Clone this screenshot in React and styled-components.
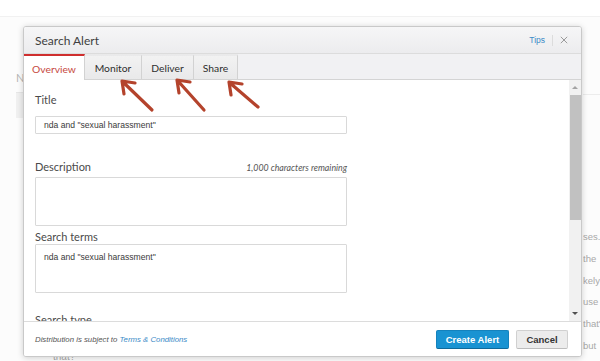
import React from 'react'
import styled, { createGlobalStyle } from 'styled-components'

const GlobalStyle = createGlobalStyle`
  html, body {
    margin: 0;
    padding: 0;
    background: #ffffff;
  }
  body {
    font-family: 'Lato', 'Liberation Sans', sans-serif;
  }
  * {
    box-sizing: border-box;
  }
`

const Screen = styled.div`
  position: relative;
  width: 600px;
  height: 361px;
  overflow: hidden;
  background: #ffffff;
`

// ---- page behind the dialog ----

const TopBand = styled.div`
  height: 17px;
  background: #ffffff;
  border-bottom: 1px solid #f1f1f1;
`

const PageBody = styled.div`
  height: 344px;
  background: #fcfcfc;
  display: grid;
  grid-template-columns: 40px 1fr 17px;
  padding-top: 54px;
`

const LeftRail = styled.div`
  display: flex;
  flex-direction: column;
  gap: 8px;
  padding-left: 16px;
  font-size: 11px;
  color: #b5b5b5;
  .box {
    height: 26px;
    background: #f0f0f0;
    border-top: 1px solid #e6e6e6;
  }
`

const MiddleCol = styled.div`
  display: flex;
  flex-direction: column;
  justify-content: flex-end;
  padding: 0 0 0 13px;
  font-family: 'Liberation Sans', Arial, sans-serif;
  font-size: 10px;
  color: #a9a9a9;
  line-height: 8px;
`

const RightRail = styled.div`
  display: flex;
  flex-direction: column;
  font-family: 'Liberation Sans', Arial, sans-serif;
  font-size: 9.5px;
  color: #a8a8a8;
  white-space: nowrap;
  overflow: hidden;
  .lines {
    height: 24px;
    border-bottom: 1px solid #ececec;
  }
  .gap {
    height: 131px;
  }
  .line {
    height: 21.8px;
    line-height: 21.8px;
  }
`

// ---- dialog ----

const Dialog = styled.div`
  position: absolute;
  left: 23px;
  top: 26px;
  width: 559px;
  height: 331px;
  background: #ffffff;
  border: 1px solid #c9c9c9;
  border-radius: 3px;
  box-shadow: 0 1px 6px rgba(0, 0, 0, 0.18);
  display: flex;
  flex-direction: column;
  overflow: hidden;
`

const DialogHeader = styled.div`
  height: 27px;
  flex-shrink: 0;
  display: flex;
  align-items: center;
  justify-content: space-between;
  padding: 0 13px 0 11px;
  background: linear-gradient(#f6f6f7, #ececee);
  border-bottom: 1px solid #dcdcdc;
`

const DialogTitle = styled.div`
  font-size: 12px;
  color: #3f3f3f;
`

const HeaderTools = styled.div`
  display: flex;
  align-items: center;
  gap: 7px;
`

const TipsLink = styled.span`
  font-family: 'Liberation Sans', Arial, sans-serif;
  font-size: 8.5px;
  color: #3b8bc7;
`

const Divider = styled.span`
  width: 1px;
  height: 11px;
  background: #dcdcdc;
`

const CloseIcon = styled.svg`
  width: 8px;
  height: 8px;
  stroke: #8e8e8e;
  stroke-width: 1.1;
`

const TabBar = styled.div`
  height: 26px;
  flex-shrink: 0;
  display: flex;
  background: #f1f1f3;
  border-bottom: 1px solid #d4d4d4;
`

const Tab = styled.div`
  width: ${({ $w }) => $w}px;
  display: flex;
  align-items: center;
  justify-content: center;
  font-size: 10.3px;
  color: ${({ $active }) => ($active ? '#c6483e' : '#2e2e2e')};
  background: ${({ $active }) => ($active ? '#ffffff' : 'linear-gradient(#f2f2f2, #e9e9ea)')};
  border-right: 1px solid #d2d2d2;
  border-top: 2px solid ${({ $active }) => ($active ? '#cf2e2e' : 'transparent')};
  margin-bottom: ${({ $active }) => ($active ? '-1px' : '0')};
  padding-top: 1px;
`

const BodyRow = styled.div`
  flex: 1;
  display: flex;
  min-height: 0;
`

const Content = styled.div`
  flex: 1;
  padding: 13px 0 0 11px;
  overflow: hidden;
`

const Field = styled.div`
  width: 312px;
  margin-bottom: ${({ $mb }) => $mb || 0}px;
`

const LabelRow = styled.div`
  display: flex;
  align-items: flex-end;
  justify-content: space-between;
  margin-bottom: ${({ $mb }) => $mb}px;
`

const Label = styled.div`
  font-size: 11px;
  color: #4a4a4a;
  line-height: 14px;
`

const Remaining = styled.div`
  font-size: 8.8px;
  font-style: italic;
  color: #555555;
  line-height: 12px;
`

const TextInput = styled.div`
  height: 18px;
  border: 1px solid #d9d9d9;
  border-radius: 1px;
  padding: 0 8px;
  display: flex;
  align-items: center;
  font-family: 'Liberation Sans', Arial, sans-serif;
  font-size: 8.6px;
  color: #3a3a3a;
`

const TextArea = styled.div`
  height: 49px;
  border: 1px solid #d9d9d9;
  border-radius: 1px;
  padding: 7px 8px;
  font-family: 'Liberation Sans', Arial, sans-serif;
  font-size: 8.6px;
  color: #3a3a3a;
`

const Scrollbar = styled.div`
  width: 12px;
  flex-shrink: 0;
  background: #f1f1f1;
  display: flex;
  flex-direction: column;
  align-items: center;
  padding: 4px 0 4px;
`

const ScrollArrow = styled.div`
  width: 0;
  height: 0;
  border-left: 3px solid transparent;
  border-right: 3px solid transparent;
  ${({ $down }) =>
    $down ? 'border-top: 3px solid #505050;' : 'border-bottom: 3px solid #a3a3a3;'}
  margin: 2px 0;
`

const Thumb = styled.div`
  width: 11px;
  height: 125px;
  margin-top: 4px;
  background: #c1c1c1;
`

const Spacer = styled.div`
  flex: 1;
`

const Footer = styled.div`
  height: 35px;
  flex-shrink: 0;
  display: flex;
  align-items: center;
  justify-content: space-between;
  padding: 0 13px 0 11px;
  border-top: 1px solid #dcdcdc;
  background: #ffffff;
`

const Notice = styled.div`
  font-family: 'Liberation Sans', Arial, sans-serif;
  font-size: 7.8px;
  font-style: italic;
  color: #555555;
  a {
    color: #3b8bc7;
    text-decoration: none;
  }
`

const Buttons = styled.div`
  display: flex;
  gap: 7px;
`

const Button = styled.button`
  height: 19px;
  width: ${({ $w }) => $w}px;
  padding: 0;
  font-family: 'Liberation Sans', Arial, sans-serif;
  font-size: 9.5px;
  font-weight: 700;
  border-radius: 2px;
  color: ${({ $primary }) => ($primary ? '#ffffff' : '#333333')};
  background: ${({ $primary }) => ($primary ? '#1993d2' : '#ececec')};
  border: 1px solid ${({ $primary }) => ($primary ? '#1482bd' : '#d0d0d0')};
  border-bottom-color: ${({ $primary }) => ($primary ? '#0f6a9b' : '#bdbdbd')};
`

const Annotations = styled.svg`
  position: absolute;
  left: 0;
  top: 0;
  width: 600px;
  height: 361px;
  pointer-events: none;
`

const arrows = [
  { tip: [122, 81], tail: [152, 110] },
  { tip: [177, 80], tail: [204, 110] },
  { tip: [229, 82], tail: [258, 107] },
]

const arrowPath = ({ tip, tail }) => {
  const [x1, y1] = tip
  const [x2, y2] = tail
  return `M${x2} ${y2} L${x1 + 1} ${y1 + 1} M${x1 + 13} ${y1 + 2} L${x1} ${y1} L${x1 + 2} ${y1 + 13}`
}

const tabs = [
  { name: 'Overview', w: 61, active: true },
  { name: 'Monitor', w: 57 },
  { name: 'Deliver', w: 52 },
  { name: 'Share', w: 44 },
]

const sideLines = ['ses.', ' the', 'kely', 'use', "that'", 'but']

export default function App() {
  return (
    <>
      <GlobalStyle />
      <Screen>
        <TopBand />
        <PageBody>
          <LeftRail>
            <div>N</div>
            <div className="box" />
          </LeftRail>
          <MiddleCol>that?</MiddleCol>
          <RightRail>
            <div className="lines" />
            <div className="gap" />
            {sideLines.map((l, i) => (
              <div className="line" key={i}>
                {l}
              </div>
            ))}
          </RightRail>
        </PageBody>

        <Dialog>
          <DialogHeader>
            <DialogTitle>Search Alert</DialogTitle>
            <HeaderTools>
              <TipsLink>Tips</TipsLink>
              <Divider />
              <CloseIcon viewBox="0 0 10 10">
                <path d="M1 1 L9 9 M9 1 L1 9" />
              </CloseIcon>
            </HeaderTools>
          </DialogHeader>

          <TabBar>
            {tabs.map((t) => (
              <Tab key={t.name} $w={t.w} $active={t.active}>
                {t.name}
              </Tab>
            ))}
          </TabBar>

          <BodyRow>
            <Content>
              <Field $mb={26}>
                <LabelRow $mb={9}>
                  <Label>Title</Label>
                </LabelRow>
                <TextInput>nda and "sexual harassment"</TextInput>
              </Field>
              <Field $mb={4}>
                <LabelRow $mb={3}>
                  <Label>Description</Label>
                  <Remaining>1,000 characters remaining</Remaining>
                </LabelRow>
                <TextArea />
              </Field>
              <Field $mb={20}>
                <LabelRow $mb={0}>
                  <Label>Search terms</Label>
                </LabelRow>
                <TextArea>nda and "sexual harassment"</TextArea>
              </Field>
              <Field>
                <Label>Search type</Label>
              </Field>
            </Content>
            <Scrollbar>
              <ScrollArrow />
              <Thumb />
              <Spacer />
              <ScrollArrow $down />
            </Scrollbar>
          </BodyRow>

          <Footer>
            <Notice>
              Distribution is subject to <a href="#terms">Terms &amp; Conditions</a>
            </Notice>
            <Buttons>
              <Button $primary $w={73}>
                Create Alert
              </Button>
              <Button $w={52}>Cancel</Button>
            </Buttons>
          </Footer>
        </Dialog>

        <Annotations viewBox="0 0 600 361">
          {arrows.map((a, i) => (
            <path
              key={i}
              d={arrowPath(a)}
              fill="none"
              stroke="#b4432c"
              strokeWidth="3.2"
              strokeLinecap="round"
              strokeLinejoin="round"
            />
          ))}
        </Annotations>
      </Screen>
    </>
  )
}
